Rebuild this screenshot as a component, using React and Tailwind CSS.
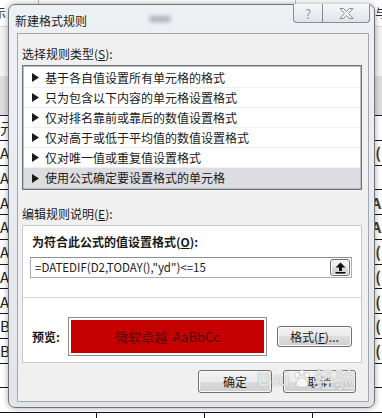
import React from 'react';

const ruleTypes = [
    '基于各自值设置所有单元格的格式',
    '只为包含以下内容的单元格设置格式',
    '仅对排名靠前或靠后的数值设置格式',
    '仅对高于或低于平均值的数值设置格式',
    '仅对唯一值或重复值设置格式',
    '使用公式确定要设置格式的单元格',
];

// visible strips of the worksheet behind the dialog
const sheetRows = [
    { left: '元', right: '' },
    { left: 'A', right: '(' },
    { left: 'A', right: '' },
    { left: 'A', right: 'A' },
    { left: 'A', right: 'A' },
    { left: 'A', right: '(' },
    { left: 'A', right: '(' },
    { left: 'A', right: '(' },
    { left: 'B', right: '(' },
    { left: 'B', right: '(' },
    { left: '', right: '' },
    { left: '', right: '' },
];

const btn = 'flex items-center justify-center rounded-[3px] border border-[#707070] bg-[linear-gradient(#f2f2f2_0%,#ebebeb_50%,#dddddd_50%,#cfcfcf_100%)] shadow-[inset_0_0_0_1px_#fbfbfb] text-[12px] text-[#1a1a1a]';

const Arrow = () => (
    <svg width="7" height="9" viewBox="0 0 7 9" className="shrink-0">
        <polygon points="0,0 7,4.5 0,9" fill="#1a1a1a" />
    </svg>
);

const UploadIcon = () => (
    <svg width="11" height="12" viewBox="0 0 11 12">
        <polygon points="5.5,0.5 10.5,5.5 0.5,5.5" fill="#111" />
        <rect x="4" y="5" width="3" height="4" fill="#111" />
        <rect x="0.5" y="10" width="10" height="1.6" fill="#111" />
    </svg>
);

const CloseGlyph = () => (
    <svg width="15" height="11" viewBox="0 0 15 11">
        <polygon
            points="1,0.5 4.5,0.5 7.5,3.5 10.5,0.5 14,0.5 9.5,5.5 14,10.5 10.5,10.5 7.5,7.5 4.5,10.5 1,10.5 5.5,5.5"
            fill="#f6f6f6"
            stroke="#8a8a8a"
            strokeWidth="1"
        />
    </svg>
);

const App = () => {
    return (
        <div className="relative w-[382px] h-[418px] overflow-hidden bg-white font-['Noto_Sans_CJK_SC',sans-serif] text-[#1a1a1a]">
            {/* Worksheet behind */}
            <div className="flex flex-col">
                <div className="relative h-[27px] flex justify-between items-center border-b border-[#d6d6d6] text-[12px]">
                    <span className="-ml-[6px] text-[#333]">示</span>
                    <span className="-mr-[5px] text-[#333]">与</span>
                    <span className="absolute left-[38px] top-0 h-[6px] border-l border-[#bdbdbd]" />
                    <span className="absolute left-[295px] top-0 h-[6px] border-l border-[#bdbdbd]" />
                </div>
                <div className="h-[49px] bg-[#f3f3f3]" />
                <div className="h-[40px] bg-[#dedede] border-b border-[#202020]" />
                {sheetRows.map((r, i) => (
                    <div key={i} className="h-[24.75px] flex justify-between items-center border-b border-[#151515] text-[15px] leading-none">
                        <span className="text-[#222]">{r.left}</span>
                        <span className="mr-[1px] font-bold text-[#4a3a25]">{r.right}</span>
                    </div>
                ))}
                <div className="flex h-[10px]">
                    <div className="w-[97px] border-r border-[#151515]" />
                    <div className="w-[108px] border-r border-[#151515]" />
                    <div className="w-[108px] border-r border-[#151515]" />
                </div>
            </div>

            {/* Dialog */}
            <div className="absolute left-[8px] top-[4px] w-[367px] h-[404px] rounded-[7px] border border-[#70757b] bg-[linear-gradient(180deg,#eef1f4,#e1e5ea)] shadow-[0_0_6px_rgba(0,0,0,0.35)] flex flex-col">
                <div className="h-[28px] flex items-start">
                    <span className="pl-[6px] pt-[8px] text-[12px] leading-[16px] text-[#1b1b1b]">新建格式规则</span>
                    <span className="ml-[62px] mt-[11px] h-[6px] w-[22px] rounded bg-[#8d949b] blur-[2px] opacity-70" />
                    <div className="ml-auto mr-[4px] -mt-[1px] flex">
                        <div className="w-[30px] h-[19px] flex items-center justify-center rounded-bl-[4px] border border-t-0 border-[#858b91] bg-[linear-gradient(#f7f8fa,#dfe3e8)] text-[13px] leading-none text-[#9a9a9a]">
                            ?
                        </div>
                        <div className="w-[47px] h-[19px] flex items-center justify-center rounded-br-[4px] border border-t-0 border-l-0 border-[#858b91] bg-[linear-gradient(#f7f8fa,#dfe3e8)]">
                            <CloseGlyph />
                        </div>
                    </div>
                </div>

                <div className="ml-[8px] mr-[5px] h-[369px] border border-[#a3a7ab] bg-[#f0f0f0] flex flex-col">
                    <p className="mt-[12px] ml-[4px] text-[12px] leading-[16px]">
                        选择规则类型(<span className="underline">S</span>):
                    </p>
                    <div className="mt-[3px] ml-[4px] w-[340px] h-[125px] border border-[#6f7277] shadow-[inset_0_0_0_1px_#b9bcc0] bg-white pt-[2px]">
                        {ruleTypes.map((t, i) => (
                            <div
                                key={t}
                                className={`mx-[1px] h-[20px] flex items-center gap-[6px] pl-[8px] text-[12px] ${i === ruleTypes.length - 1 ? 'bg-[#dcdce1]' : 'border-b border-[#efefef]'}`}
                            >
                                <Arrow />
                                <span>{t}</span>
                            </div>
                        ))}
                    </div>

                    <p className="mt-[16px] ml-[4px] text-[12px] leading-[16px]">
                        编辑规则说明(<span className="underline">E</span>):
                    </p>
                    <div className="mt-[3px] ml-[4px] w-[340px] h-[138px] border border-[#c9c9c9] bg-white flex flex-col">
                        <p className="pt-[8px] pl-[9px] text-[12px] leading-[16px] font-bold">
                            为符合此公式的值设置格式(<span className="underline">O</span>):
                        </p>
                        <div className="mt-[7px] ml-[7px] w-[322px] h-[21px] border border-[#abadb3] border-t-[#8e9198] flex items-center">
                            <span className="pl-[4px] text-[11.5px] leading-none">=DATEDIF(D2,TODAY(),"yd")&lt;=15</span>
                            <div className={`${btn} ml-auto mr-[1px] w-[20px] h-[17px] rounded-[2px]`}>
                                <UploadIcon />
                            </div>
                        </div>
                        <div className="mt-[19px] border-t border-[#d7d7d7]" />
                        <div className="mt-[19px] flex items-center">
                            <span className="pl-[9px] w-[45px] text-[12px] font-bold">预览:</span>
                            <div className="w-[199px] h-[39px] border border-[#8f8f8f] bg-white p-[2px]">
                                <div className="h-full bg-[#c40000] flex items-center justify-center text-[13px] text-[#560808]">
                                    微软卓越&nbsp;&nbsp;AaBbCc
                                </div>
                            </div>
                            <button className={`${btn} ml-[10px] w-[75px] h-[21px]`}>
                                格式(<span className="underline">F</span>)...
                            </button>
                        </div>
                    </div>

                    <div className="mt-[7px] mr-[12px] flex justify-end gap-[11px]">
                        <button className={`${btn} w-[74px] h-[23px]`}>确定</button>
                        <button className={`${btn} w-[73px] h-[23px]`}>取消</button>
                    </div>
                </div>
            </div>

            {/* watermark */}
            <div className="absolute left-[257px] top-[368px] flex items-center gap-[2px] text-[21px] font-bold leading-none text-white/75 [text-shadow:0_0_1px_rgba(120,120,120,0.8)]">
                <span className="font-['Liberation_Sans',sans-serif]">Bai</span>
                <svg width="20" height="20" viewBox="0 0 20 20">
                    <g fill="rgba(255,255,255,0.75)" stroke="rgba(140,140,140,0.6)" strokeWidth="0.6">
                        <ellipse cx="5" cy="6" rx="2.2" ry="2.8" />
                        <ellipse cx="10" cy="3.5" rx="2.2" ry="2.8" />
                        <ellipse cx="15" cy="6" rx="2.2" ry="2.8" />
                        <path d="M4 16 C4 11 8 9 10 9 C12 9 16 11 16 16 C16 19 4 19 4 16 Z" />
                    </g>
                </svg>
                <span>经验</span>
            </div>
        </div>
    );
};

export default App;
